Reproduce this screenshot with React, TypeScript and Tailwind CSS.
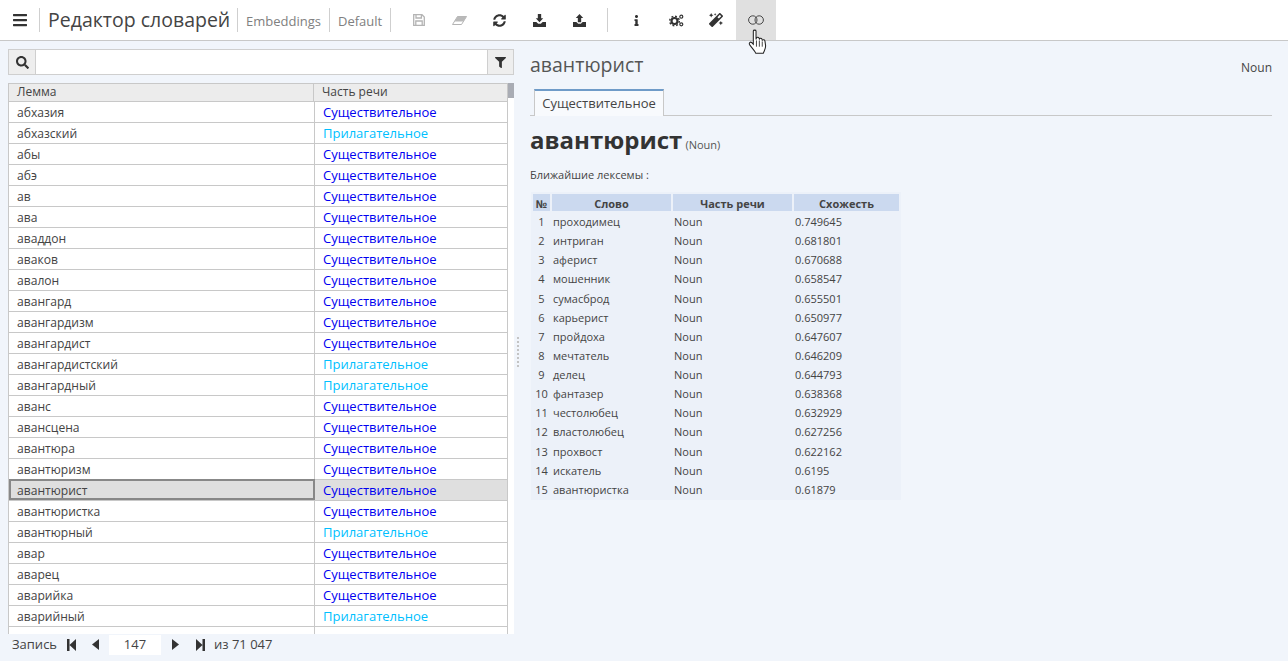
import { FaSyncAlt, FaInfo, FaMagic, FaSearch, FaFilter, FaBars } from "react-icons/fa";

const N = "Существительное";
const A = "Прилагательное";

const lemmas: [string, string][] = [
  ["абхазия", N], ["абхазский", A], ["абы", N], ["абэ", N], ["ав", N], ["ава", N],
  ["аваддон", N], ["аваков", N], ["авалон", N], ["авангард", N], ["авангардизм", N],
  ["авангардист", N], ["авангардистский", A], ["авангардный", A], ["аванс", N],
  ["авансцена", N], ["авантюра", N], ["авантюризм", N], ["авантюрист", N],
  ["авантюристка", N], ["авантюрный", A], ["авар", N], ["аварец", N], ["аварийка", N],
  ["аварийный", A], ["", ""],
];

const similar = [
  ["проходимец", "0.749645"], ["интриган", "0.681801"], ["аферист", "0.670688"],
  ["мошенник", "0.658547"], ["сумасброд", "0.655501"], ["карьерист", "0.650977"],
  ["пройдоха", "0.647607"], ["мечтатель", "0.646209"], ["делец", "0.644793"],
  ["фантазер", "0.638368"], ["честолюбец", "0.632929"], ["властолюбец", "0.627256"],
  ["прохвост", "0.622162"], ["искатель", "0.6195"], ["авантюристка", "0.61879"],
];

function Sep({ className = "" }: { className?: string }) {
  return <div className={`h-6 w-px bg-[#cfcfcf] ${className}`} />;
}

function ToolBtn({ children, active }: { children: React.ReactNode; active?: boolean }) {
  return (
    <div className={`flex h-10 w-10 items-center justify-center text-[#333] ${active ? "bg-[#e0e0e0]" : ""}`}>
      {children}
    </div>
  );
}

function TrayIcon({ up }: { up?: boolean }) {
  return (
    <svg width="13" height="13" viewBox="0 0 14 14" fill="#333">
      {up ? <path d="M7 0 L11 4.4 H8.8 V9 H5.2 V4.4 H3 Z" /> : <path d="M5.2 0 H8.8 V4.6 H11 L7 9 L3 4.6 H5.2 Z" />}
      <path d="M0 8.5 H3.6 L5.6 10.6 H8.4 L10.4 8.5 H14 V14 H0 Z" />
    </svg>
  );
}

function SaveIcon() {
  return (
    <svg width="12" height="12" viewBox="0 0 12 12" fill="none" stroke="#b4b4b4" strokeWidth="1.3">
      <path d="M.7 .7 H9 L11.3 3 V11.3 H.7 Z" />
      <path d="M3 .9 V4 H8.4 V.9" />
      <path d="M2.8 11.2 V7 H9.2 V11.2" />
    </svg>
  );
}

function EraserIcon() {
  return (
    <svg width="15" height="9" viewBox="0 0 15 9">
      <path d="M5.5 .5 H14.5 L9.5 8.5 H.5 Z" fill="none" stroke="#b4b4b4" strokeWidth="1" />
      <path d="M5.5 .5 H14.5 L11.4 5.5 H2.4 Z" fill="#b9b9b9" />
    </svg>
  );
}

function CogsIcon() {
  return (
    <svg width="15" height="13" viewBox="0 0 15 13" fill="none" stroke="#333">
      <circle cx="5.5" cy="7" r="3" strokeWidth="2.2" />
      <circle cx="5.5" cy="7" r="4.8" strokeWidth="1.4" strokeDasharray="1.9 1.87" />
      <circle cx="12.3" cy="2.7" r="1.5" strokeWidth="1.2" />
      <circle cx="12.3" cy="10.3" r="1.5" strokeWidth="1.2" />
    </svg>
  );
}

function StepIcon({ right }: { right?: boolean }) {
  return (
    <svg width="9" height="12" viewBox="0 0 9 12" fill="#333">
      {right ? <path d="M0 0 L6.5 6 L0 12 Z M6.5 0 H9 V12 H6.5 Z" /> : <path d="M0 0 H2.5 V12 H0 Z M9 0 V12 L2.5 6 Z" />}
    </svg>
  );
}

function CaretIcon({ right }: { right?: boolean }) {
  return (
    <svg width="7" height="11" viewBox="0 0 7 11" fill="#333">
      {right ? <path d="M0 0 L7 5.5 L0 11 Z" /> : <path d="M7 0 V11 L0 5.5 Z" />}
    </svg>
  );
}

export default function App() {
  return (
    <div className="flex h-[661px] w-[1288px] flex-col overflow-hidden bg-[#f1f5fb] font-['Open_Sans',sans-serif] text-[#444]">
      {/* Toolbar */}
      <div className="relative flex h-[41px] shrink-0 items-center border-b border-[#c8c8c8] bg-white">
        <div className="flex w-[39px] justify-center pl-px text-[#333]">
          <FaBars size={16} />
        </div>
        <Sep />
        <div className="w-[197px] pl-2 text-[19.5px] leading-6 whitespace-nowrap text-[#444]">Редактор словарей</div>
        <Sep />
        <div className="w-[91px] pt-[3px] pl-2 text-[13px] whitespace-nowrap text-[#808080]">Embeddings</div>
        <Sep />
        <div className="w-[60px] pt-[3px] pl-2 text-[13px] whitespace-nowrap text-[#808080]">Default</div>
        <Sep />
        <div className="ml-2 flex items-center">
          <ToolBtn><SaveIcon /></ToolBtn>
          <ToolBtn><EraserIcon /></ToolBtn>
          <ToolBtn><FaSyncAlt size={13} /></ToolBtn>
          <ToolBtn><TrayIcon /></ToolBtn>
          <ToolBtn><TrayIcon up /></ToolBtn>
          <Sep className="mx-2" />
          <ToolBtn><FaInfo size={11} /></ToolBtn>
          <ToolBtn><CogsIcon /></ToolBtn>
          <ToolBtn><FaMagic size={14} /></ToolBtn>
          <ToolBtn active>
            <svg width="16" height="10" viewBox="0 0 16 10" fill="none" stroke="#444" strokeWidth="1">
              <circle cx="4.8" cy="5" r="4.2" />
              <circle cx="11.2" cy="5" r="4.2" />
            </svg>
          </ToolBtn>
        </div>
        {/* mouse pointer */}
        <svg className="absolute top-[29px] left-[748px] z-10" width="20" height="26" viewBox="0 0 19 25">
          <path
            d="M5 2 C5 .8 7.6 .8 7.6 2 V10 L8 8.6 C8.4 7.6 10.4 7.8 10.6 9 L10.8 9.6 C11.4 8.6 13.2 8.8 13.4 10 L13.6 10.8 C14.4 10 16 10.4 16.2 11.6 L16.8 16 C17 19 15.6 20.6 14.6 23.4 H7.4 C6.4 20.8 3.8 18.6 1.4 15 C.6 13.6 2 12 3.4 13 L5 14.6 Z"
            fill="#fff"
            stroke="#222"
            strokeWidth="1"
          />
          <path d="M8 11 V17 M10.8 11 V17 M13.6 12 V17" stroke="#222" strokeWidth="0.8" />
        </svg>
      </div>

      <div className="flex min-h-0 flex-1">
        {/* Left panel */}
        <div className="flex w-[522px] shrink-0 flex-col pt-2 pl-2">
          <div className="flex h-[26px] w-[506px] shrink-0 border border-[#cfcfcf] bg-white">
            <div className="flex w-[27px] items-center justify-center border-r border-[#cfcfcf] bg-[#eeeeee] text-[#333]">
              <FaSearch size={13} />
            </div>
            <div className="flex-1" />
            <div className="flex w-[26px] items-center justify-center border-l border-[#cfcfcf] bg-[#eeeeee] text-[#333]">
              <FaFilter size={11} />
            </div>
          </div>
          <div className="mt-2 flex min-h-0 w-[506px] flex-1 overflow-hidden bg-white">
            <div className="w-[500px] shrink-0 border-x border-t border-[#c8c8c8]">
              <div className="flex h-[18px] items-start border-b border-[#c8c8c8] bg-[#ececec] text-[12px] leading-[15px] text-[#444]">
                <div className="h-full w-[305px] border-r border-[#c8c8c8] pl-2">Лемма</div>
                <div className="pl-2">Часть речи</div>
              </div>
              {lemmas.map(([lemma, pos], i) => {
                const selected = lemma === "авантюрист";
                return (
                  <div key={i} className={`flex h-[21px] border-b border-[#c8c8c8] text-[13px] leading-[20px] ${selected ? "bg-[#dfdfdf]" : ""}`}>
                    <div className={`w-[306px] shrink-0 text-[12.1px] whitespace-nowrap ${selected ? "-mt-px h-[21px] border-2 border-[#888] pl-[6px] leading-[19px]" : "h-5 border-r border-[#c8c8c8] pl-2 leading-[21px]"}`}>
                      {lemma}
                    </div>
                    <div className={`pl-2 whitespace-nowrap ${pos === A ? "text-[#00bfff]" : "text-[#0000f0]"}`}>{pos}</div>
                  </div>
                );
              })}
            </div>
            <div className="flex-1">
              <div className="h-[15px] bg-[#a9acb4]" />
            </div>
          </div>
          {/* Pager */}
          <div className="flex h-[27px] w-[506px] shrink-0 items-center pb-[6px] text-[13px] text-[#444]">
            <span className="ml-1 w-[55px]">Запись</span>
            <StepIcon />
            <div className="ml-4"><CaretIcon /></div>
            <div className="ml-[10px] flex h-[20px] w-[52px] items-center justify-center bg-white">147</div>
            <div className="ml-[11px]"><CaretIcon right /></div>
            <div className="ml-[17px]"><StepIcon right /></div>
            <span className="ml-[9px] whitespace-nowrap">из 71 047</span>
          </div>
          {/* drag handle */}
          <div className="absolute top-[337px] left-[517px] flex flex-col gap-[2px]">
            {[0, 1, 2, 3, 4, 5, 6, 7].map((d) => (
              <div key={d} className="h-[2px] w-[2px] bg-[#c4c4c4]" />
            ))}
          </div>
        </div>

        {/* Right panel */}
        <div className="min-w-0 flex-1 pt-[10px] pr-4 pl-2">
          <div className="flex items-start justify-between">
            <span className="text-[19.5px] leading-[27px] text-[#555]">авантюрист</span>
            <span className="mt-2 text-[12px] leading-[18px] text-[#444]">Noun</span>
          </div>
          <div className="mt-[11px] h-[27px] border-b border-[#c8c8c8] pl-1">
            <div className="h-[27px] w-[130px] border-x border-t-2 border-[#c8c8c8] border-t-[#6f9bc8] bg-[#f8fafd] text-center text-[13px] leading-[24px] text-[#444]">
              {N}
            </div>
          </div>
          <div className="mt-2 flex items-end">
            <span className="text-[24px] leading-[32px] font-bold text-[#333]">авантюрист</span>
            <span className="mb-[3px] ml-[3px] text-[11px] text-[#555]">(Noun)</span>
          </div>
          <div className="mt-[11px] text-[11px] leading-[15px] text-[#444]">Ближайшие лексемы :</div>
          <table className="mt-[10px] ml-px w-[370px] table-fixed border-separate border-spacing-x-[2px] border-spacing-y-[2px] bg-[#ecf1f9] text-[11px] leading-[15px]">
            <thead>
              <tr className="h-[17px] text-[11px] font-bold text-[#444]">
                <th className="w-[17px] bg-[#cbd9ef] p-0 pt-[2px] font-bold">№</th>
                <th className="w-[119px] bg-[#cbd9ef] p-0 pt-[2px] font-bold">Слово</th>
                <th className="w-[119px] bg-[#cbd9ef] p-0 pt-[2px] font-bold">Часть речи</th>
                <th className="bg-[#cbd9ef] p-0 pt-[2px] font-bold">Схожесть</th>
              </tr>
            </thead>
            <tbody>
              {similar.map(([word, score], i) => (
                <tr key={word} className="h-[17.14px] text-[#444]">
                  <td className="p-0 text-center">{i + 1}</td>
                  <td className="p-0 pl-px whitespace-nowrap">{word}</td>
                  <td className="p-0 pl-px">Noun</td>
                  <td className="p-0 pl-px">{score}</td>
                </tr>
              ))}
            </tbody>
          </table>
        </div>
      </div>
    </div>
  );
}
